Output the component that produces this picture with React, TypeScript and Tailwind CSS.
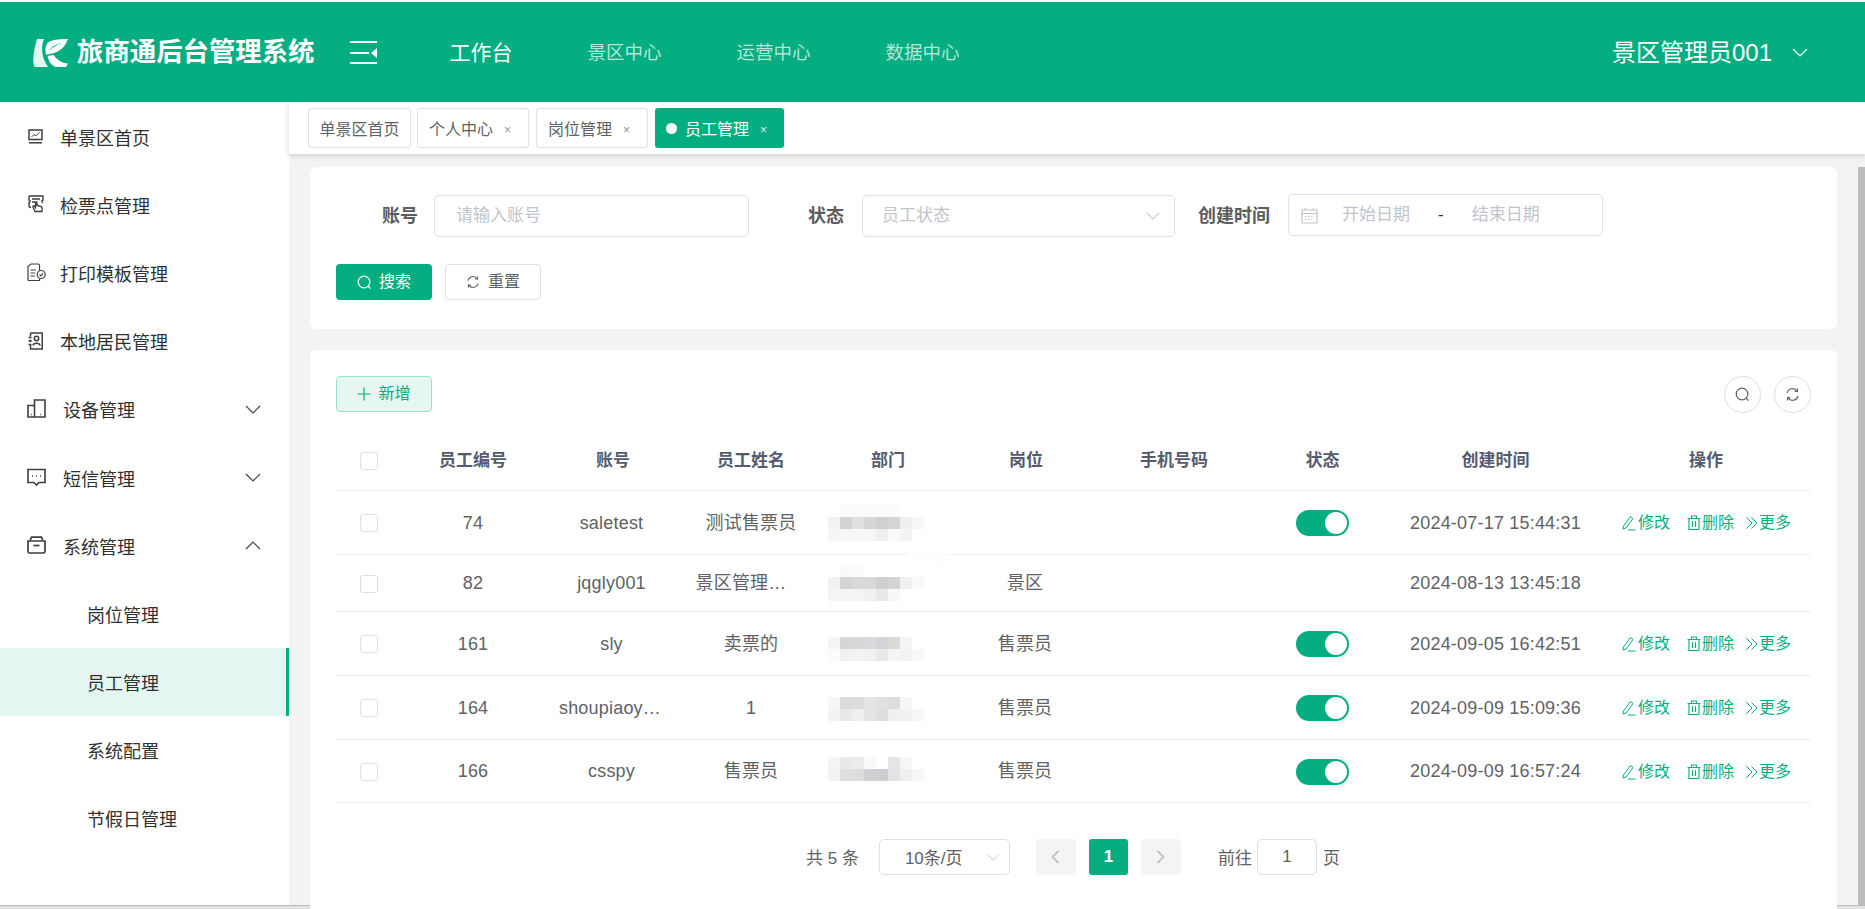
import React from 'react'

function Chevron({ up, className }: { up?: boolean; className?: string }) {
    return (
        <svg viewBox="0 0 16 9" fill="none" stroke="currentColor" strokeWidth="1.2" className={className}>
            <path d={up ? 'M1 8 L8 1 L15 8' : 'M1 1 L8 8 L15 1'} />
        </svg>
    )
}

function SearchIcon({ className }: { className?: string }) {
    return (
        <svg viewBox="0 0 16 16" fill="none" stroke="currentColor" strokeWidth="1.3" className={className}>
            <circle cx="7.5" cy="7.5" r="6.2" />
            <path d="M12 12 L14.5 14.5" />
        </svg>
    )
}

function RefreshIcon({ className }: { className?: string }) {
    return (
        <svg viewBox="0 0 16 16" fill="none" stroke="currentColor" strokeWidth="1.2" className={className}>
            <path d="M2.2 6.4 A6 6 0 0 1 13 4.4" />
            <path d="M13.8 9.6 A6 6 0 0 1 3 11.6" />
            <path d="M13.4 1.6 L13.2 4.8 L10.2 4.4" />
            <path d="M2.6 14.4 L2.8 11.2 L5.8 11.6" />
        </svg>
    )
}

function PencilIcon() {
    return (
        <svg viewBox="0 0 14 16" fill="none" stroke="currentColor" strokeWidth="1" className="h-4 w-[14px]">
            <path d="M1.5 11 L8.5 1.5 L11 3.5 L4 13 L1 14 Z" />
            <path d="M6 15 H13.5" />
        </svg>
    )
}

function TrashIcon() {
    return (
        <svg viewBox="0 0 14 16" fill="none" stroke="currentColor" strokeWidth="1.1" className="h-4 w-[14px]">
            <path d="M0.5 3.5 H13.5 M4.5 3.5 V1 H9.5 V3.5 M2 3.5 V14.5 H12 V3.5 M5.5 6 V12 M8.5 6 V12" />
        </svg>
    )
}

function MoreIcon() {
    return (
        <svg viewBox="0 0 14 14" fill="none" stroke="currentColor" strokeWidth="1" className="h-[14px] w-[14px]">
            <path d="M1.5 1.5 L7 7 L1.5 12.5 M6.5 1.5 L12 7 L6.5 12.5" />
        </svg>
    )
}

const navIcons: Record<string, React.ReactNode> = {
    home: (
        <svg viewBox="0 0 15 15" fill="none" stroke="#3f3f3f" strokeWidth="1.5" className="ml-[1px] h-[15px] w-[15px]">
            <rect x="1" y="1" width="13" height="9.5" />
            <path d="M3.5 8 L6 5.5 L8 6.8 L11.5 3.2" strokeWidth="1" />
            <path d="M1 13.8 H14" />
        </svg>
    ),
    ticket: (
        <svg viewBox="0 0 18 18" fill="none" stroke="#3f3f3f" strokeWidth="1.4" className="h-[18px] w-[18px]">
            <path d="M2 1 H16 V5 C14.5 5 14.5 7.5 16 7.5 M2 1 V5 C3.5 5 3.5 7.5 2 7.5 V10 C2 12 3 12.5 4 12.5" />
            <path d="M5 4 H13 M5 7 H8" />
            <path d="M8 16.5 L6 12 C5.6 10.8 7 10.4 7.6 11.4 L8.5 12.5 V7.5 C8.5 6.4 10 6.4 10 7.5 V10.5 L14 11.5 C15.5 12 15.5 13 15 16.5 Z" />
        </svg>
    ),
    print: (
        <svg viewBox="0 0 19 19" fill="none" stroke="#3f3f3f" strokeWidth="1.2" className="h-[19px] w-[19px]">
            <path d="M2 17.5 C1.2 17.5 1 17 1 16 V3.5 L4 1 H11 C12 1 12.5 1.5 12.5 2.5 V8 M12.5 16 V17.5 H2" />
            <path d="M3.5 7 H9 M3.5 10 H8 M3.5 13 H8" />
            <circle cx="14.2" cy="11.5" r="4" />
            <path d="M12.5 11.5 L13.8 12.8 L16 10.4" />
        </svg>
    ),
    resident: (
        <svg viewBox="0 0 15 18" fill="none" stroke="#3f3f3f" strokeWidth="1.5" className="ml-[1px] h-[18px] w-[15px]">
            <path d="M2.5 1 H14.2 V17 H2.5 V13 M2.5 10 V7.5 M2.5 4.5 V1" />
            <path d="M0.5 5.5 H3.5 M0.5 9 H3.5 M0.5 12.5 H3.5" />
            <circle cx="8.5" cy="6.5" r="2.2" />
            <path d="M5 13.5 C5.3 10.5 11.7 10.5 12 13.5" />
        </svg>
    ),
    device: (
        <svg viewBox="0 0 19 19" fill="none" stroke="#3f3f3f" strokeWidth="1.6" className="h-[19px] w-[19px]">
            <path d="M7.5 18 H1 V6.5 H7.5 V1 H18 V18 H7.5 V6.5" />
            <path d="M4 15.5 H4.8 M13 15.5 H13.8" />
        </svg>
    ),
    sms: (
        <svg viewBox="0 0 19 19" fill="none" stroke="#3f3f3f" strokeWidth="1.6" className="h-[19px] w-[19px]">
            <path d="M1 1.5 H18 V14.5 H12 L9.5 17 L7 14.5 H1 Z" />
            <path d="M5 8 H6 M9 8 H10 M13 8 H14" />
        </svg>
    ),
    system: (
        <svg viewBox="0 0 19 18" fill="none" stroke="#3f3f3f" strokeWidth="1.7" className="h-[18px] w-[19px]">
            <path d="M1 5 H18 V15.5 C18 16.5 17.5 17 16.5 17 H2.5 C1.5 17 1 16.5 1 15.5 Z" />
            <path d="M3 4.5 L4.5 1.2 H14.5 L16 4.5" />
            <path d="M6.5 9.5 H12.5" />
        </svg>
    ),
}

const menu = [
    { label: '单景区首页', icon: 'home' },
    { label: '检票点管理', icon: 'ticket' },
    { label: '打印模板管理', icon: 'print' },
    { label: '本地居民管理', icon: 'resident' },
    { label: '设备管理', icon: 'device', arrow: 'down' },
    { label: '短信管理', icon: 'sms', arrow: 'down' },
    { label: '系统管理', icon: 'system', arrow: 'up' },
]

const subMenu = ['岗位管理', '员工管理', '系统配置', '节假日管理']

const columns = 'grid grid-cols-[67px_140px_140px_136px_137px_138px_160px_137px_209px_211px] items-center'

const rows = [
    {
        id: '74', account: 'saletest', name: '测试售票员', post: '', time: '2024-07-17 15:44:31', on: true, h: 'h-[64px]',
        blur: [
            { y: 14, cells: ['#ffffff', '#fbfbfb', '#fafafa', '#fafafa', '#fafafa', '#fbfbfb', '#ffffff', '#ffffff'] },
            { y: 26, cells: ['#f3f2f1', '#d0d2d3', '#dfe1df', '#d6d6d8', '#cfd0d2', '#d5d5d6', '#eeeff0', '#f8f8f8'] },
            { y: 38, cells: ['#f6f6f6', '#f6f6f6', '#f7f7f7', '#f6f6f6', '#eeeff1', '#fafafa', '#f4f4f4', '#ffffff'] },
        ],
    },
    {
        id: '82', account: 'jqgly001', name: '景区管理…', post: '景区', time: '2024-08-13 13:45:18', on: false, h: 'h-[57px]',
        blur: [
            { y: 10, cells: ['#ffffff', '#fafafa', '#fbfbfb', '#ffffff', '#ffffff', '#ffffff', '#ffffff', '#ffffff'] },
            { y: 22, cells: ['#f3f2f1', '#d2d4d5', '#d8d9d9', '#d8d8d9', '#cfcfd2', '#d3d3d3', '#f0f0f2', '#f9f9f9'] },
            { y: 34, cells: ['#f5f5f5', '#f4f5f5', '#f4f4f4', '#f0f0f0', '#e8e8ea', '#f8f8f8', '#ffffff', '#ffffff'] },
        ],
    },
    {
        id: '161', account: 'sly', name: '卖票的', post: '售票员', time: '2024-09-05 16:42:51', on: true, h: 'h-[64px]',
        blur: [
            { y: 25, cells: ['#f5f5f3', '#d5d6d8', '#d8d8da', '#d9d9db', '#d3d4d8', '#dadad8', '#f4f5f7', '#ffffff'] },
            { y: 37, cells: ['#fbfbfb', '#f0f1f2', '#f3f3f3', '#f1f1f1', '#e8e9eb', '#f5f5f6', '#f3f3f3', '#f8f8f8'] },
        ],
    },
    {
        id: '164', account: 'shoupiaoy…', name: '1', post: '售票员', time: '2024-09-09 15:09:36', on: true, h: 'h-[64px]',
        blur: [
            { y: 21, cells: ['#f7f7f7', '#dadbdd', '#dbdcdd', '#e4e5e6', '#e0e2e2', '#dcdddd', '#f6f6f6', '#ffffff'] },
            { y: 33, cells: ['#f3f3f3', '#e8e9eb', '#eeeeef', '#e3e4e5', '#dcdee0', '#efefef', '#f1f1f2', '#f7f7f7'] },
        ],
    },
    {
        id: '166', account: 'csspy', name: '售票员', post: '售票员', time: '2024-09-09 16:57:24', on: true, h: 'h-[63px]',
        blur: [
            { y: 17, cells: ['#f5f5f5', '#e8eae9', '#ebecec', '#fafafa', '#ffffff', '#e4e5e6', '#f6f6f6', '#ffffff'] },
            { y: 29, cells: ['#f2f2f2', '#dcdee0', '#dcdddf', '#cfd0d3', '#ccced1', '#e2e3e4', '#eeeff0', '#f7f7f7'] },
        ],
    },
]

function Checkbox() {
    return <div className="ml-[24px] h-[18px] w-[18px] rounded-[3px] border border-[#dcdfe6] bg-white" />
}

// the department column is a blurred-out smear in the picture
function Mosaic({ blur, smudge, h }: { blur: { y: number; cells: string[] }[]; smudge?: boolean; h: string }) {
    return (
        <svg className={`ml-[9px] w-[96px] overflow-visible ${h}`} shapeRendering="crispEdges">
            {blur.map((row) =>
                row.cells.map((c, i) => <rect key={`${row.y}-${i}`} x={i * 12} y={row.y} width="12" height="12" fill={c} />),
            )}
            {smudge && <polygon points="68,60 120,62 118,74 90,68" fill="#fdfdfd" />}
        </svg>
    )
}

function App() {
    return (
        <div className="flex h-[909px] w-[1865px] flex-col overflow-hidden bg-white font-['Liberation_Sans','Noto_Sans_CJK_SC',sans-serif] text-[#606266]">
            <div className="h-[2px] shrink-0 bg-white" />

            <header className="flex h-[100px] shrink-0 items-center bg-[#05ae80] pt-[1px] text-white">
                <svg viewBox="0 0 35 28" fill="#fff" className="ml-[33px] h-[28px] w-[35px]">
                    <path d="M4 0 L11 0 C8 7 8 18 15 28 L2 28 C-1 25 0 14 4 0 Z" opacity="0.9" />
                    <path d="M35 0 C30 0 20 0 15 3.5 C12 7 12 11 13 15.5 C21 15 31 12 35 0 Z M29 4 C24 5 19 7 16 12 C20 8 24 6 29 4 Z" fillRule="evenodd" />
                    <path d="M14.5 17 L20.5 16 C24 21 29 24 35 24.5 L33 28 L23 28 C18 26 15.5 22 14.5 17 Z" />
                </svg>
                <div className="ml-[9px] text-[26.4px] leading-none font-bold">旅商通后台管理系统</div>
                <div className="ml-[35px] flex h-[23px] w-[27px] flex-col justify-between">
                    <div className="h-[2px] bg-white" />
                    <div className="flex items-center justify-between">
                        <div className="h-[2px] w-[19px] bg-white" />
                        <div className="h-0 w-0 border-y-[5px] border-r-[6px] border-y-transparent border-r-white" />
                    </div>
                    <div className="h-[2px] bg-white" />
                </div>
                <div className="ml-[73px] text-[21px]">工作台</div>
                <div className="ml-[75px] text-[18.5px] text-white/70">景区中心</div>
                <div className="ml-[75px] text-[18.5px] text-white/70">运营中心</div>
                <div className="ml-[75px] text-[18.5px] text-white/70">数据中心</div>
                <div className="ml-auto text-[24px]">景区管理员001</div>
                <Chevron className="mr-[57px] ml-[20px] h-[9px] w-[16px]" />
            </header>

            <div className="flex min-h-0 flex-1">
                <aside className="w-[289px] shrink-0 text-[18px] text-[#303133]">
                    {menu.map((m, i) => (
                        <div key={m.label} className="flex h-[68.2px] items-center pt-[6px]">
                            <div className="flex w-[60px] pb-[6px] pl-[27px]">{navIcons[m.icon]}</div>
                            <span className={i > 3 ? 'ml-[3px]' : ''}>{m.label}</span>
                            {m.arrow && <Chevron up={m.arrow === 'up'} className="mr-[28px] mb-[5px] ml-auto h-[9px] w-[16px] text-[#444]" />}
                        </div>
                    ))}
                    {subMenu.map((s) => (
                        <div
                            key={s}
                            className={
                                s === '员工管理'
                                    ? 'flex h-[68.2px] items-center border-r-[3px] border-[#05ae80] bg-[#e3f6f1] pt-[6px] pl-[87px]'
                                    : 'flex h-[68.2px] items-center pt-[6px] pl-[87px]'
                            }
                        >
                            {s}
                        </div>
                    ))}
                </aside>

                <main className="flex min-w-0 flex-1 flex-col">
                    <div className="z-10 flex h-[52px] shrink-0 items-start gap-[6px] bg-white pt-[6px] pl-[19px] text-[16px] shadow-[0_2px_5px_rgba(110,110,140,0.28)]">
                        <div className="flex h-[40px] w-[103px] items-center justify-center rounded-[3px] border border-[#dcdfe6] pt-[3px]">单景区首页</div>
                        <div className="flex h-[40px] w-[112px] items-center rounded-[3px] border border-[#dcdfe6] pt-[3px] pl-[11px]">
                            个人中心<span className="ml-[11px] text-[12px] text-[#909399]">×</span>
                        </div>
                        <div className="ml-px flex h-[40px] w-[112px] items-center rounded-[3px] border border-[#dcdfe6] pt-[3px] pl-[11px]">
                            岗位管理<span className="ml-[11px] text-[12px] text-[#909399]">×</span>
                        </div>
                        <div className="ml-px flex h-[40px] w-[129px] items-center rounded-[3px] bg-[#05ae80] pt-[3px] pl-[11px] text-white">
                            <span className="mr-[8px] mb-[3px] h-[11px] w-[11px] rounded-full bg-white" />
                            员工管理<span className="ml-[11px] text-[12px] text-white/80">×</span>
                        </div>
                    </div>

                    <div className="relative min-h-0 flex-1 bg-[#f3f3f3] pt-[13px] pr-[28px] pl-[21px]">
                        <div className="absolute top-[13px] right-0 bottom-0 w-[7px] bg-[#bcbcbc]" />

                        <section className="h-[162px] rounded-[6px] bg-white pt-[28px] pl-[26px]">
                            <div className="flex h-[42px] items-start text-[17px]">
                                <label className="w-[82px] text-right text-[18px] leading-[42px] font-bold text-[#5c5c5c]">账号</label>
                                <input
                                    placeholder="请输入账号"
                                    className="ml-[16px] h-[42px] w-[315px] rounded-[5px] border border-[#dcdfe6] pl-[21px] outline-none placeholder:text-[#c0c4cc]"
                                />
                                <label className="ml-[59px] w-[37px] text-[18px] leading-[42px] font-bold text-[#5c5c5c]">状态</label>
                                <div className="ml-[17px] flex h-[42px] w-[313px] items-center justify-between rounded-[5px] border border-[#dcdfe6] pr-[14px] pl-[19px] text-[#c0c4cc]">
                                    员工状态
                                    <Chevron className="h-[8px] w-[14px]" />
                                </div>
                                <label className="ml-[23px] w-[73px] text-[18px] leading-[42px] font-bold whitespace-nowrap text-[#5c5c5c]">创建时间</label>
                                <div className="-mt-px ml-[17px] flex h-[42px] w-[315px] items-center rounded-[5px] border border-[#dcdfe6] pl-[12px] text-[#c0c4cc]">
                                    <svg viewBox="0 0 17 17" fill="none" stroke="currentColor" strokeWidth="1.2" className="h-[17px] w-[17px]">
                                        <path d="M1 3 H16 V16 H1 Z M1 6.5 H16 M4.5 1 V3 M12.5 1 V3" />
                                        <path d="M4 9.5 H13 M4 12.5 H13" strokeDasharray="1.5 1.5" />
                                    </svg>
                                    <span className="ml-[24px]">开始日期</span>
                                    <span className="ml-[28px] text-[#303133]">-</span>
                                    <span className="ml-[28px]">结束日期</span>
                                </div>
                            </div>
                            <div className="mt-[27px] flex gap-[13px] text-[16px]">
                                <button className="flex h-[36px] w-[96px] items-center justify-center gap-[7px] rounded-[4px] bg-[#05ae80] text-white">
                                    <SearchIcon className="h-[15px] w-[15px]" />
                                    搜索
                                </button>
                                <button className="flex h-[36px] w-[96px] items-center justify-center gap-[8px] rounded-[4px] border border-[#dcdfe6]">
                                    <RefreshIcon className="h-[14px] w-[14px]" />
                                    重置
                                </button>
                            </div>
                        </section>

                        <section className="mt-[21px] h-[640px] rounded-t-[6px] bg-white px-[26px] pt-[26px]">
                            <div className="flex h-[36px] items-center justify-between">
                                <button className="flex h-[36px] w-[96px] items-center justify-center gap-[7px] rounded-[4px] border border-[#98e0c9] bg-[#e6f7f2] text-[16px] text-[#05ae80]">
                                    <svg viewBox="0 0 14 14" stroke="currentColor" strokeWidth="1.2" className="h-[14px] w-[14px]">
                                        <path d="M7 0.5 V13.5 M0.5 7 H13.5" />
                                    </svg>
                                    新增
                                </button>
                                <div className="flex gap-[13px]">
                                    <div className="flex h-[37px] w-[37px] items-center justify-center rounded-full border border-[#dcdfe6]">
                                        <SearchIcon className="h-[15px] w-[15px]" />
                                    </div>
                                    <div className="flex h-[37px] w-[37px] items-center justify-center rounded-full border border-[#dcdfe6]">
                                        <RefreshIcon className="h-[15px] w-[15px]" />
                                    </div>
                                </div>
                            </div>

                            <div className={`${columns} mt-[18px] h-[61px] border-b border-[#ebeef5] pt-[2px] text-center text-[17px] font-bold text-[#555b6e]`}>
                                <Checkbox />
                                <div>员工编号</div>
                                <div>账号</div>
                                <div>员工姓名</div>
                                <div className="pl-px">部门</div>
                                <div className="pl-[2px]">岗位</div>
                                <div>手机号码</div>
                                <div>状态</div>
                                <div>创建时间</div>
                                <div className="pl-px">操作</div>
                            </div>

                            {rows.map((r, i) => (
                                <div key={r.id} className={`${columns} ${r.h} border-b border-[#ebeef5] text-center text-[18px] tracking-[0.2px]`}>
                                    <Checkbox />
                                    <div>{r.id}</div>
                                    <div className={r.account.endsWith('…') ? 'pr-[6px]' : 'pr-[3px]'}>{r.account}</div>
                                    <div className={r.name.endsWith('…') ? 'pr-[20px]' : ''}>{r.name}</div>
                                    <Mosaic blur={r.blur} smudge={i === 0} h={r.h} />
                                    <div>{r.post}</div>
                                    <div />
                                    <div className="flex justify-center">
                                        {r.on && (
                                            <div className="flex h-[26px] w-[53px] items-center justify-end rounded-full bg-[#05ae80] pr-[2px]">
                                                <div className="h-[22px] w-[22px] rounded-full bg-white" />
                                            </div>
                                        )}
                                    </div>
                                    <div>{r.time}</div>
                                    <div>
                                        {r.on && (
                                            <div className="ml-[22px] flex items-center text-[16px] tracking-normal text-[#05ae80]">
                                                <PencilIcon />
                                                <span className="ml-[2px]">修改</span>
                                                <span className="ml-[17px] flex items-center"><TrashIcon /></span>
                                                <span className="ml-[1px]">删除</span>
                                                <span className="ml-[11px] flex items-center"><MoreIcon /></span>
                                                <span>更多</span>
                                            </div>
                                        )}
                                    </div>
                                </div>
                            ))}

                            <div className="mt-[36px] ml-[470px] flex h-[36px] items-center text-[17px]">
                                <span className="pt-[3px] whitespace-pre">共 5 条</span>
                                <div className="ml-[20px] flex h-[36px] w-[131px] items-center rounded-[5px] border border-[#dcdfe6] pl-[25px]">
                                    <span className="pt-[3px]">10条/页</span>
                                    <Chevron className="ml-[24px] h-[7px] w-[12px] text-[#c0c4cc]" />
                                </div>
                                <div className="ml-[26px] flex h-[36px] w-[40px] items-center justify-center rounded-[3px] bg-[#f4f4f5]">
                                    <svg viewBox="0 0 9 14" fill="none" stroke="#c0c4cc" strokeWidth="2" className="h-[14px] w-[9px]"><path d="M7.5 1 L1.5 7 L7.5 13" /></svg>
                                </div>
                                <div className="ml-[13px] flex h-[36px] w-[39px] items-center justify-center rounded-[3px] bg-[#05ae80] text-[17px] font-bold text-white">1</div>
                                <div className="ml-[13px] flex h-[36px] w-[40px] items-center justify-center rounded-[3px] bg-[#f4f4f5]">
                                    <svg viewBox="0 0 9 14" fill="none" stroke="#c0c4cc" strokeWidth="2" className="h-[14px] w-[9px]"><path d="M1.5 1 L7.5 7 L1.5 13" /></svg>
                                </div>
                                <span className="ml-[37px] pt-[3px]">前往</span>
                                <div className="ml-[5px] flex h-[36px] w-[60px] items-center justify-center rounded-[5px] border border-[#dcdfe6]">1</div>
                                <span className="ml-[6px] pt-[3px]">页</span>
                            </div>
                        </section>
                    </div>
                </main>
            </div>

            <div className="h-[4px] shrink-0 border-t border-[#bbbbbb] bg-[#e2e2e2]" />
        </div>
    )
}

export default App
